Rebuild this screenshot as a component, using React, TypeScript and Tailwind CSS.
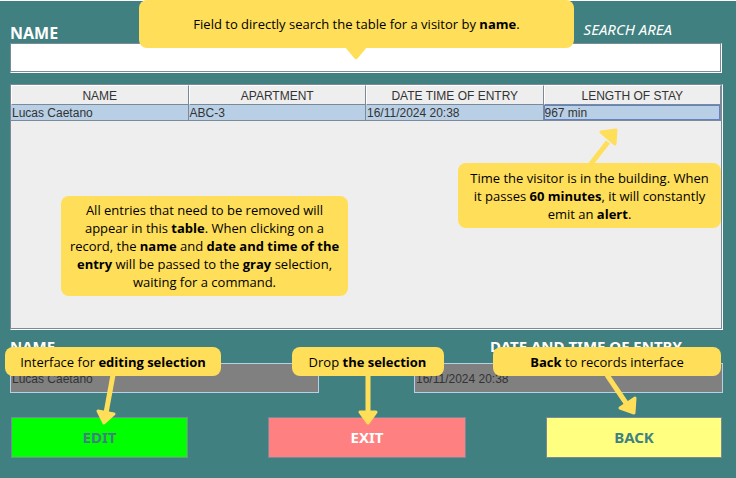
import type { ReactNode } from "react";

const columns = ["NAME", "APARTMENT", "DATE TIME OF ENTRY", "LENGTH OF STAY"];
const records = [["Lucas Caetano", "ABC-3", "16/11/2024 20:38", "967 min"]];

function Callout({ className, children }: { className: string; children: ReactNode }) {
  return (
    <div
      className={`absolute z-20 flex items-center justify-center rounded-lg bg-[#ffde59] text-center font-['Open_Sans',sans-serif] text-[13px] leading-[18px] text-black ${className}`}
    >
      <p>{children}</p>
    </div>
  );
}

function Arrow({ className, width, height, stem, head }: { className: string; width: number; height: number; stem: string; head: string }) {
  return (
    <svg aria-hidden="true" width={width} height={height} className={`absolute z-10 overflow-visible ${className}`}>
      <path d={stem} stroke="#ffde59" strokeWidth="5" fill="none" />
      <path d={head} fill="#ffde59" stroke="#ffde59" strokeWidth="3" strokeLinejoin="round" />
    </svg>
  );
}

export default function App() {
  return (
    <main className="min-h-screen border-t border-white bg-[#408080] pr-[13px] pb-5 pl-[10px] font-['Liberation_Sans',Arial,sans-serif] text-[12px] text-[#333333]">
      <section className="relative">
        <div className="flex h-[42px] items-end justify-between text-white">
          <label htmlFor="search" className="font-['Noto_Sans',sans-serif] text-[16px] leading-5 font-bold">
            NAME
          </label>
          <span className="mr-[51px] mb-1 font-['Noto_Sans',sans-serif] text-[15px] leading-5 italic">SEARCH AREA</span>
        </div>
        <div className="mr-px border border-t-[#7a8a99] border-r-white border-b-white border-l-[#7a8a99]">
          <input
            id="search"
            type="text"
            className="block h-7 w-full border-r border-b border-[#7a8a99] bg-white px-1 outline-none"
          />
        </div>
        <Callout className="-top-px right-[149px] left-[129px] h-12">
          Field to directly search the table for a visitor by <b>name</b>.
        </Callout>
        <svg aria-hidden="true" width="22" height="13" className="absolute top-[46px] left-1/2 z-20 -ml-[22px]">
          <path d="M0 0H22L12.500 11.500Q11 13 9.500 11.500Z" fill="#ffde59" />
        </svg>
      </section>

      <section className="relative mt-[11px] border border-t-[#7a8a99] border-r-white border-b-white border-l-[#7a8a99]">
        <div className="h-[244px] border-r border-b border-[#7a8a99] bg-[#eeeeee]">
          <table className="w-full table-fixed border-separate border-spacing-0">
            <thead>
              <tr>
                {columns.map((column) => (
                  <th
                    key={column}
                    scope="col"
                    className="h-5 border border-t-white border-r-[#7a8a99] border-b-[#7a8a99] border-l-white p-0 pt-px leading-4 font-normal"
                  >
                    {column}
                  </th>
                ))}
              </tr>
            </thead>
            <tbody>
              {records.map((record) => (
                <tr key={record[0]} className="bg-[#b8cfe5]">
                  {record.map((value, index) => (
                    <td key={columns[index]} className="h-4 border-r border-b border-[#7a8a99] p-0 leading-[14px]">
                      <div className={index === 3 ? "px-px pt-px outline outline-[#6382bf] -outline-offset-1" : "px-px pt-px"}>{value}</div>
                    </td>
                  ))}
                </tr>
              ))}
            </tbody>
          </table>
        </div>
        <Callout className="top-[78px] right-px h-[65px] w-[263px]">
          Time the visitor is in the building. When
          <br />
          it passes <b>60 minutes</b>, it will constantly
          <br />
          emit an <b>alert</b>.
        </Callout>
        <Arrow className="top-[42px] right-[102px]" width={32} height={38} stem="M2 38L20 15" head="M13 5L28 3L27 17Z" />
        <Callout className="top-[111px] left-[50px] h-[100px] w-[287px]">
          All entries that need to be removed will
          <br />
          appear in this <b>table</b>. When clicking on a
          <br />
          record, the <b>name</b> and <b>date and time of the</b>
          <br />
          <b>entry</b> will be passed to the <b>gray</b> selection,
          <br />
          waiting for a command.
        </Callout>
      </section>

      <section className="relative">
        <div className="grid grid-cols-2 gap-[95px] pt-[6px]">
          <div>
            <label htmlFor="visitor" className="block h-[27px] font-['Noto_Sans',sans-serif] text-[15px] leading-5 font-bold text-white">
              NAME
            </label>
            <input id="visitor" readOnly value="Lucas Caetano" className="block h-[30px] w-full border border-[#b8cfe5] bg-[#808080] px-px pt-0.5 outline-none" />
          </div>
          <div>
            <label htmlFor="entry" className="block h-[27px] pl-[76px] font-['Noto_Sans',sans-serif] text-[15px] leading-5 font-bold whitespace-nowrap text-white">
              DATE AND TIME OF ENTRY
            </label>
            <input id="entry" readOnly value="16/11/2024 20:38" className="block h-[30px] w-full border border-[#b8cfe5] bg-[#808080] px-px pt-0.5 outline-none" />
          </div>
        </div>
        <div className="mt-6 grid grid-cols-[177fr_198fr_176fr] gap-20 pr-px pl-px font-['Noto_Sans',sans-serif] text-[15px] font-bold">
          <button type="button" className="h-[41px] border border-[#7a8a99] bg-[#00ff00] text-[#408080]">EDIT</button>
          <button type="button" className="h-[41px] border border-[#7a8a99] bg-[#ff8080] text-white">EXIT</button>
          <button type="button" className="h-[41px] border border-[#7a8a99] bg-[#ffff80] text-[#408080]">BACK</button>
        </div>
        <Callout className="top-[17px] -left-[5px] h-[29px] w-[216px]">
          Interface for <b>editing selection</b>
        </Callout>
        <Arrow className="top-[45px] left-[85px]" width={24} height={50} stem="M18 0L11 38" head="M3 36L19 39L9 48Z" />
        <Callout className="top-[17px] left-1/2 -ml-[75px] h-[29px] w-[152px]">
          Drop&nbsp;<b>the selection</b>
        </Callout>
        <Arrow className="top-[45px] left-1/2 -ml-[10px]" width={22} height={50} stem="M11 0V38" head="M3 37H19L11 48Z" />
        <Callout className="top-[17px] right-0.5 h-[29px] w-[228px]">
          <b>Back</b>&nbsp;to records interface
        </Callout>
        <Arrow className="top-[45px] right-[86px]" width={34} height={42} stem="M4 0L23 28" head="M17 33L32 23L31 38Z" />
      </section>
    </main>
  );
}
